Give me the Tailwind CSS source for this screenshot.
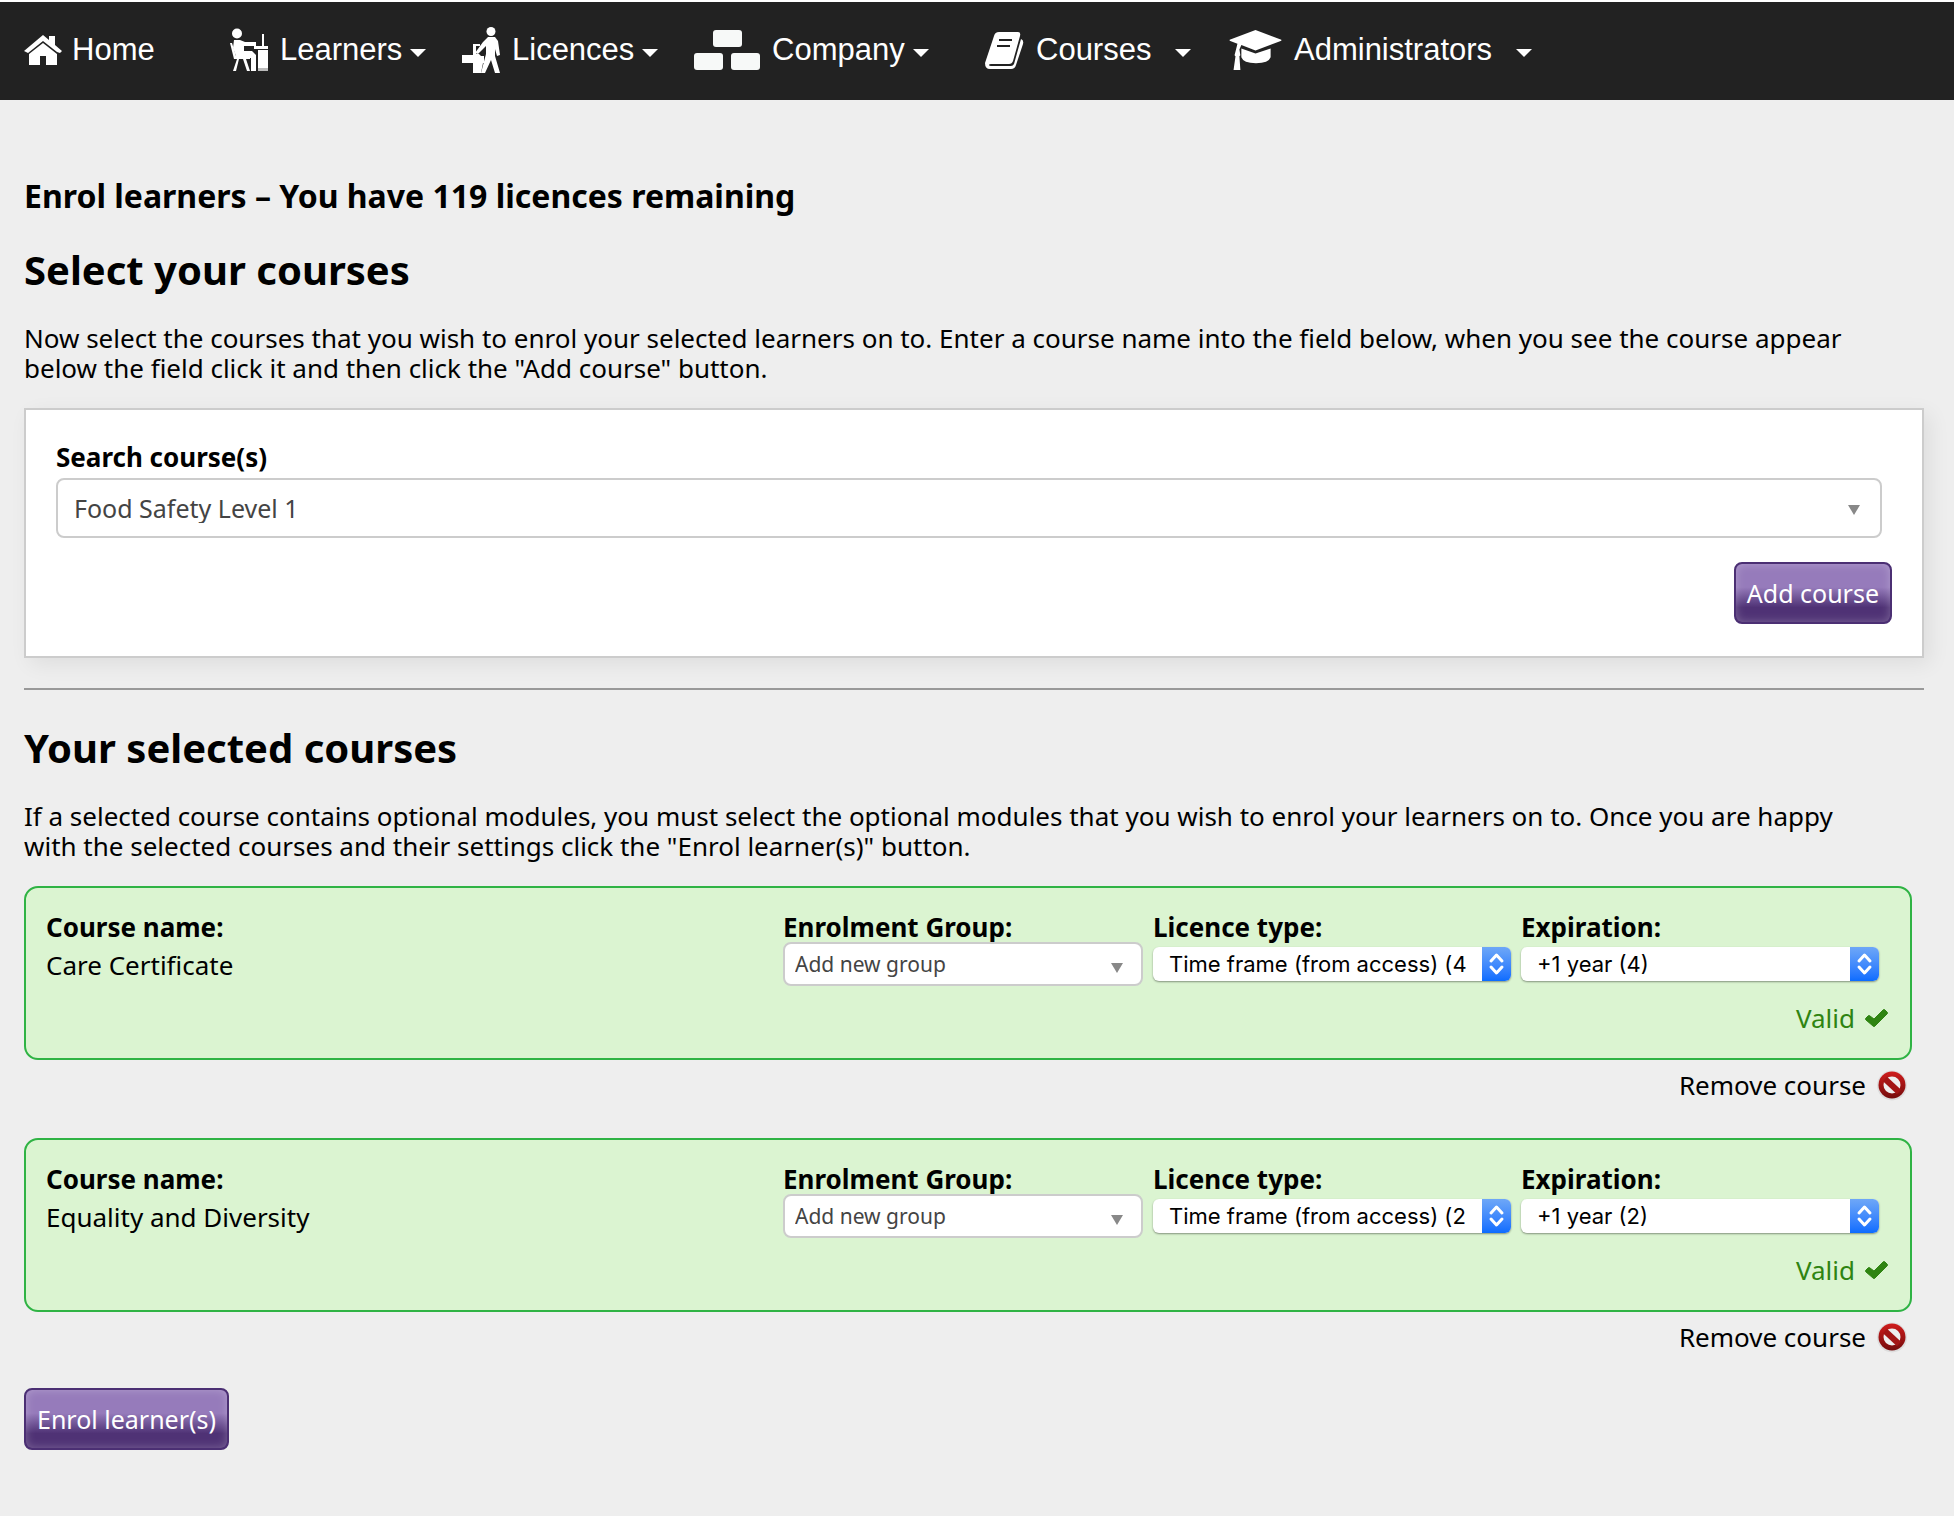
<!DOCTYPE html>
<html lang="en">
<head>
<meta charset="utf-8">
<meta name="viewport" content="width=device-width, initial-scale=1">
<title>Enrol learners</title>
<script src="https://cdn.jsdelivr.net/npm/@tailwindcss/browser@4"></script>
</head>
<body class="min-h-screen bg-[#eee] font-['Noto_Sans',sans-serif] text-[26px] leading-[30px] text-black">

<header class="border-t-2 border-white bg-[#222] font-['Liberation_Sans',Arial,sans-serif] text-[31px] leading-9 text-white">
  <nav aria-label="Main" class="flex h-[98px] items-center pb-0.5 pl-6">
    <a href="#" class="flex w-[206px] items-center gap-2.5">
      <svg class="h-[30px] w-[38px]" viewBox="0 0 38 30" fill="#fff" aria-hidden="true">
        <path d="M19 0 25 5V1h6v9l7 6-2 2-3-1L19 6 4 18l-4-2z"/>
        <path d="M19 8 33 19v11H22v-9h-6v9H5V19z"/>
      </svg>
      Home
    </a>
    <a href="#" class="flex w-[232px] items-center">
      <svg class="mr-3 h-11 w-[38px]" viewBox="0 0 38 44" fill="#fff" aria-hidden="true">
        <circle cx="7" cy="5.500" r="5"/>
        <path d="M4 12h6l5 2h11v4H14v5h8l4 4v16h-5V30h-8l-7-2-3-8z"/>
        <path d="M0 15h2l4 13h14v3h-4l4 12h-3l-4-12H9L6 43H3l4-12H4z"/>
        <path d="M32 6h2v12h4v3H24v-3h8z"/>
        <path d="M28 22h10v18H28z"/><path d="M28 40h10v3H28z" fill="#bbb"/>
      </svg>
      Learners
      <svg class="ml-2 mt-1.5 h-2 w-4" viewBox="0 0 16 8" fill="#fff" aria-hidden="true"><path d="M0 0h16L8 8z"/></svg>
    </a>
    <a href="#" class="flex w-[232px] items-center">
      <svg class="mr-3 h-[46px] w-[38px]" viewBox="0 0 38 46" fill="#fff" aria-hidden="true">
        <circle cx="29" cy="4.500" r="4.500"/>
        <path d="M26 10h7l3 4 2 14-3 1-2-7v7l5 17h-5l-4-13-6 13h-4l5-19V19l-8 8-3-1 8-11z"/>
        <path d="M11 17h7v2h-4v8h3l2 2h3v7h-1l-2 10h-8V36H0v-8h11z"/>
      </svg>
      Licences
      <svg class="ml-2 mt-1.5 h-2 w-4" viewBox="0 0 16 8" fill="#fff" aria-hidden="true"><path d="M0 0h16L8 8z"/></svg>
    </a>
    <a href="#" class="flex w-[291px] items-center">
      <svg class="mr-3 h-10 w-[66px]" viewBox="0 0 66 40" fill="#f7f9f8" aria-hidden="true">
        <rect x="19" width="29" height="17" rx="3"/><rect y="23" width="29" height="17" rx="3"/><rect x="37" y="23" width="29" height="17" rx="3"/>
      </svg>
      Company
      <svg class="ml-2 mt-1.5 h-2 w-4" viewBox="0 0 16 8" fill="#fff" aria-hidden="true"><path d="M0 0h16L8 8z"/></svg>
    </a>
    <a href="#" class="flex w-[244px] items-center">
      <svg class="mr-3 h-[37px] w-[39px]" viewBox="0 0 39 37" aria-hidden="true">
        <path fill="#fff" d="M14 0h19q3 0 2 4L28 29q-1 3-4 3H6q-2 0-2 1t2 1h20q2 0 3-2L36 7q3 1 2 5l-7 21q-1 4-5 4H5q-5 0-5-6L9 4q1-4 5-4z"/>
        <path stroke="#222" stroke-width="2" d="M14 8h13M12 14h13"/>
      </svg>
      Courses
      <svg class="ml-6 mt-1.5 h-2 w-4" viewBox="0 0 16 8" fill="#fff" aria-hidden="true"><path d="M0 0h16L8 8z"/></svg>
    </a>
    <a href="#" class="flex items-center">
      <svg class="mr-3 h-10 w-[53px]" viewBox="0 0 53 41" fill="#fff" aria-hidden="true">
        <path d="M26.500 0 53 10v1L26.500 21 12 15.500 10 20l1 6-1 1 1 14H4l2-14-1-1 1-4 2-8-8-3v-1z"/>
        <path d="m12 19 14.500 5L42 19v9q-2 6-15 6t-15-6z"/>
      </svg>
      Administrators
      <svg class="ml-6 mt-1.5 h-2 w-4" viewBox="0 0 16 8" fill="#fff" aria-hidden="true"><path d="M0 0h16L8 8z"/></svg>
    </a>
  </nav>
</header>

<main class="pl-6 pr-[30px] pt-[78px]">
  <h1 class="text-[32px] font-bold leading-9">Enrol learners – You have 119 licences remaining</h1>
  <h2 class="mt-[33px] text-[40px] font-bold leading-[46px]">Select your courses</h2>
  <p class="mt-[30px] pr-10">Now select the courses that you wish to enrol your selected learners on to. Enter a course name into the field below, when you see the course appear below the field click it and then click the "Add course" button.</p>

  <section class="mt-[25px] border-2 border-[#ccc] bg-white px-[30px] pb-8 pt-8 shadow-[6px_6px_20px_rgba(0,0,0,0.07)]">
    <label for="search" class="block font-bold">Search course(s)</label>
    <div class="relative mt-1.5 mr-2.5">
      <select id="search" class="block h-[60px] w-full appearance-none rounded-lg border-2 border-[#ccc] bg-white pl-4 pr-14 text-[25px] text-[#444]"><option>Food Safety Level 1</option></select>
      <svg class="pointer-events-none absolute right-[22px] top-[27px] h-2.5 w-3" viewBox="0 0 12 10" fill="#888" aria-hidden="true"><path d="M0 0h12L6 10z"/></svg>
    </div>
    <div class="mt-6 flex justify-end">
      <button class="h-[62px] rounded-lg border-2 border-[#4b2f73] bg-linear-to-b from-[#967bbb] from-40% to-[#4f3275] to-75% px-[11px] text-[25px] text-white shadow-[inset_0_0_10px_rgba(255,255,255,0.25)]">Add course</button>
    </div>
  </section>

  <hr class="mt-[30px] border-t-2 border-[#999]">

  <h2 class="mt-[35px] text-[40px] font-bold leading-[46px]">Your selected courses</h2>
  <p class="mt-[30px] pr-10">If a selected course contains optional modules, you must select the optional modules that you wish to enrol your learners on to. Once you are happy with the selected courses and their settings click the "Enrol learner(s)" button.</p>

  <ul id="courses" class="mr-3 mt-[25px] flex flex-col gap-[35px]"></ul>

  <button class="mt-[33px] h-[62px] rounded-lg border-2 border-[#4b2f73] bg-linear-to-b from-[#967bbb] from-40% to-[#4f3275] to-75% px-[11px] text-[25px] text-white shadow-[inset_0_0_10px_rgba(255,255,255,0.25)]">Enrol learner(s)</button>
</main>

<template id="course">
  <li>
    <article class="rounded-[14px] border-2 border-[#2fb344] bg-[#dbf4d1] pb-[25px] pl-5 pt-6">
      <div class="mr-[31px] grid grid-cols-[1fr_360px_358px_358px] gap-x-2.5">
        <div>
          <h3 class="font-bold">Course name:</h3>
          <p class="mt-2" data-name></p>
        </div>
        <label><span class="block font-bold">Enrolment Group:</span>
          <span class="relative block">
            <select class="block h-11 w-full appearance-none rounded-lg border-2 border-[#ccc] bg-white pl-2.5 pr-10 text-[21px] leading-7 text-[#444]"><option>Add new group</option></select>
            <svg class="pointer-events-none absolute right-5 top-[21px] h-2.5 w-3" viewBox="0 0 12 10" fill="#888" aria-hidden="true"><path d="M0 0h12L6 10z"/></svg>
          </span>
        </label>
        <label><span class="block font-bold">Licence type:</span>
          <span class="relative mt-[5px] block">
            <select data-licence class="block h-[34px] w-full appearance-none rounded-md bg-white pl-4 pr-10 font-['Inter',sans-serif] text-[22px] leading-7 text-black shadow-[0_1px_2px_rgba(0,0,0,0.4)]"></select>
            <svg class="pointer-events-none absolute right-0 top-0 h-[34px] w-[29px] rounded-r-md bg-linear-to-b from-[#6ea7f7] to-[#0a6cff]" viewBox="0 0 29 34" fill="none" stroke="#fff" stroke-width="3" stroke-linecap="round" stroke-linejoin="round" aria-hidden="true"><path d="m9 14 5.500-6 5.500 6M9 20l5.500 6 5.500-6"/></svg>
          </span>
        </label>
        <label><span class="block font-bold">Expiration:</span>
          <span class="relative mt-[5px] block">
            <select data-expiry class="block h-[34px] w-full appearance-none rounded-md bg-white pl-4 pr-10 font-['Inter',sans-serif] text-[22px] leading-7 text-black shadow-[0_1px_2px_rgba(0,0,0,0.4)]"></select>
            <svg class="pointer-events-none absolute right-0 top-0 h-[34px] w-[29px] rounded-r-md bg-linear-to-b from-[#6ea7f7] to-[#0a6cff]" viewBox="0 0 29 34" fill="none" stroke="#fff" stroke-width="3" stroke-linecap="round" stroke-linejoin="round" aria-hidden="true"><path d="m9 14 5.500-6 5.500 6M9 20l5.500 6 5.500-6"/></svg>
          </span>
        </label>
      </div>
      <p class="mr-[22px] mt-[17px] flex items-center justify-end gap-2.5 text-[#2f8412]">Valid
        <svg class="h-[18px] w-[23px]" viewBox="0 0 23 18" fill="#2f8412" stroke="#2f8412" stroke-width="1" aria-hidden="true"><path d="M3 7q1-1 2 0l4 3 9-9q1-1 2 0l2 2q1 1 0 2L10 17q-1 1-2 0L1 11q-1-1 0-2z"/></svg>
      </p>
    </article>
    <div class="flex justify-end pr-1 pt-[7px]">
      <button class="flex h-9 items-center gap-2.5">Remove course
        <svg class="h-8 w-8" viewBox="0 0 32 32" aria-hidden="true">
          <defs><linearGradient id="red" x2="0" y2="1"><stop stop-color="#d01c1c"/><stop offset="1" stop-color="#740c0c"/></linearGradient></defs>
          <circle cx="16" cy="16.500" r="15" fill="#ddd"/>
          <circle cx="16" cy="16" r="13.500" fill="url(#red)"/>
          <circle cx="16" cy="16" r="8.500" fill="#eee"/>
          <path d="m9 10 14 13" stroke="#a31515" stroke-width="6"/>
        </svg>
      </button>
    </div>
  </li>
</template>

<script>
  const courses = [
    { name: 'Care Certificate', licence: 'Time frame (from access) (4', expiry: '+1 year (4)' },
    { name: 'Equality and Diversity', licence: 'Time frame (from access) (2', expiry: '+1 year (2)' }
  ];
  const template = document.getElementById('course');
  for (const course of courses) {
    const item = template.content.cloneNode(true);
    item.querySelector('[data-name]').textContent = course.name;
    item.querySelector('[data-licence]').add(new Option(course.licence));
    item.querySelector('[data-expiry]').add(new Option(course.expiry));
    document.getElementById('courses').append(item);
  }
</script>
</body>
</html>
